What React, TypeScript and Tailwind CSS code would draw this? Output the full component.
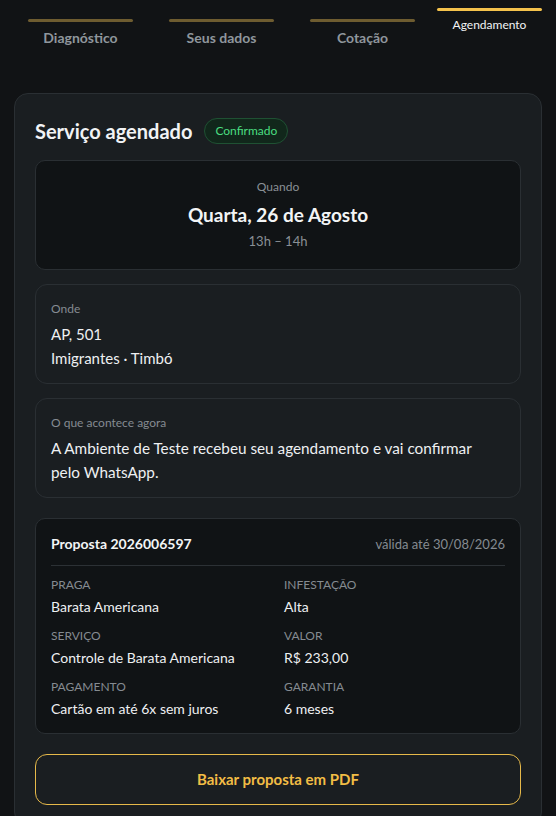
import React from "react";

const font = { fontFamily: 'Lato, "Noto Sans", sans-serif' };

function Tab({ label }: { label: string }) {
  return (
    <div className="mt-[11px] flex w-[105px] flex-col items-center">
      <div className="h-[3px] w-[105px] rounded-full bg-[#6e5c30]" />
      <div className="mt-[7px] text-[14px] font-bold leading-[18px] text-[#8f969c]">{label}</div>
    </div>
  );
}

function Field({ label, value }: { label: string; value: string }) {
  return (
    <div className="flex flex-col">
      <div className="text-[12px] leading-[16px] text-[#858b91] uppercase">{label}</div>
      <div className="mt-[5px] text-[14px] leading-[18px] text-[#eef0f2]">{value}</div>
    </div>
  );
}

export default function App() {
  return (
    <div className="min-h-[816px] w-full overflow-hidden bg-[#111315] pb-10" style={font}>
      <div className="flex items-start gap-[36px] pl-[28px] pt-[8px]">
        <Tab label="Diagnóstico" />
        <Tab label="Seus dados" />
        <Tab label="Cotação" />
        <div className="-ml-[14px] flex w-[105px] shrink-0 flex-col items-center">
          <div className="h-[3px] w-[105px] rounded-full bg-[#f4c24c]" />
          <div className="mt-[6px] text-[12px] leading-[16px] text-[#f2f4f5]">Agendamento</div>
        </div>
      </div>

      <div className="mx-[14px] mt-[46px] rounded-[14px] border border-[#2a2f33] bg-[#1a1e21] px-[20px] pt-[22px] pb-[20px]">
        <div className="flex items-center gap-[12px]">
          <div className="text-[20px] font-bold leading-[30px] text-[#f1f3f5]">Serviço agendado</div>
          <div className="flex h-[26px] items-center rounded-full border border-[#1f5133] bg-[#11271b] px-[10px] text-[12px] text-[#4ade80]">
            Confirmado
          </div>
        </div>

        <div className="mt-[14px] flex flex-col items-center rounded-[10px] border border-[#2a2f33] bg-[#101315] pt-[18px] pb-[19px]">
          <div className="text-[12px] leading-[16px] text-[#8a9096]">Quando</div>
          <div className="mt-[8px] text-[19px] font-bold leading-[24px] text-[#f3f5f6]">Quarta, 26 de Agosto</div>
          <div className="mt-[5px] text-[13px] leading-[18px] text-[#8a9096]">13h – 14h</div>
        </div>

        <div className="mt-[14px] rounded-[12px] border border-[#2a2f33] bg-[#1a1e21] px-[15px] pt-[16px] pb-[13px]">
          <div className="text-[12px] leading-[16px] text-[#858b91]">Onde</div>
          <div className="mt-[5px] text-[15px] leading-[24px] text-[#eef0f2]">AP, 501</div>
          <div className="text-[15px] leading-[24px] text-[#eef0f2]">Imigrantes · Timbó</div>
        </div>

        <div className="mt-[14px] rounded-[12px] border border-[#2a2f33] bg-[#1a1e21] pl-[15px] pr-[32px] pt-[16px] pb-[13px]">
          <div className="text-[12px] leading-[16px] text-[#858b91]">O que acontece agora</div>
          <div className="mt-[5px] text-[15.3px] leading-[24px] text-[#eef0f2]">
            A Ambiente de Teste recebeu seu agendamento e vai confirmar pelo WhatsApp.
          </div>
        </div>

        <div className="mt-[20px] rounded-[10px] border border-[#2a2f33] bg-[#101315] px-[15px] pt-[16px] pb-[15px]">
          <div className="flex items-center justify-between pb-[12px] border-b border-[#2c3135]">
            <div className="text-[14px] font-bold leading-[18px] text-[#f3f5f6]">Proposta 2026006597</div>
            <div className="text-[13px] leading-[18px] text-[#858b91]">válida até 30/08/2026</div>
          </div>
          <div className="mt-[11px] grid grid-cols-2 gap-x-3 gap-y-[12px]">
            <Field label="Praga" value="Barata Americana" />
            <Field label="Infestação" value="Alta" />
            <Field label="Serviço" value="Controle de Barata Americana" />
            <Field label="Valor" value="R$ 233,00" />
            <Field label="Pagamento" value="Cartão em até 6x sem juros" />
            <Field label="Garantia" value="6 meses" />
          </div>
        </div>

        <button className="mt-[20px] flex h-[51px] w-full items-center justify-center rounded-[12px] border border-[#e6b94a] bg-transparent text-[15px] font-bold text-[#f2bd45]">
          Baixar proposta em PDF
        </button>
      </div>
    </div>
  );
}
